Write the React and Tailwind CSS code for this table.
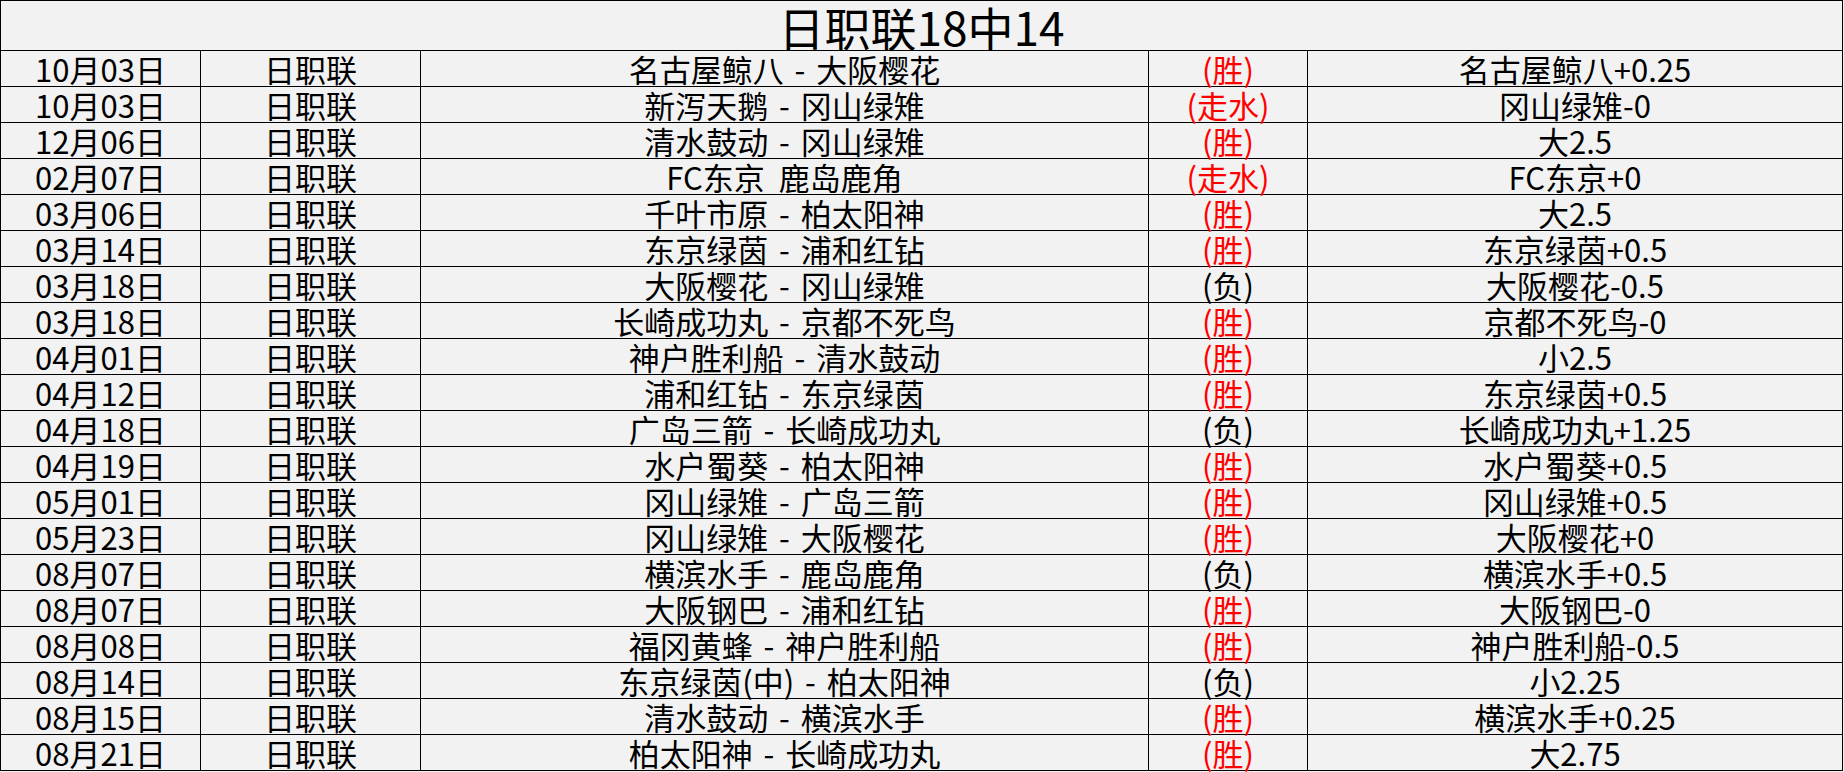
import React from "react";

const rows = [
  ["10月03日", "日职联", "名古屋鲸八 - 大阪樱花", "(胜)", true, "名古屋鲸八+0.25"],
  ["10月03日", "日职联", "新泻天鹅 - 冈山绿雉", "(走水)", true, "冈山绿雉-0"],
  ["12月06日", "日职联", "清水鼓动 - 冈山绿雉", "(胜)", true, "大2.5"],
  ["02月07日", "日职联", "FC东京  鹿岛鹿角", "(走水)", true, "FC东京+0"],
  ["03月06日", "日职联", "千叶市原 - 柏太阳神", "(胜)", true, "大2.5"],
  ["03月14日", "日职联", "东京绿茵 - 浦和红钻", "(胜)", true, "东京绿茵+0.5"],
  ["03月18日", "日职联", "大阪樱花 - 冈山绿雉", "(负)", false, "大阪樱花-0.5"],
  ["03月18日", "日职联", "长崎成功丸 - 京都不死鸟", "(胜)", true, "京都不死鸟-0"],
  ["04月01日", "日职联", "神户胜利船 - 清水鼓动", "(胜)", true, "小2.5"],
  ["04月12日", "日职联", "浦和红钻 - 东京绿茵", "(胜)", true, "东京绿茵+0.5"],
  ["04月18日", "日职联", "广岛三箭 - 长崎成功丸", "(负)", false, "长崎成功丸+1.25"],
  ["04月19日", "日职联", "水户蜀葵 - 柏太阳神", "(胜)", true, "水户蜀葵+0.5"],
  ["05月01日", "日职联", "冈山绿雉 - 广岛三箭", "(胜)", true, "冈山绿雉+0.5"],
  ["05月23日", "日职联", "冈山绿雉 - 大阪樱花", "(胜)", true, "大阪樱花+0"],
  ["08月07日", "日职联", "横滨水手 - 鹿岛鹿角", "(负)", false, "横滨水手+0.5"],
  ["08月07日", "日职联", "大阪钢巴 - 浦和红钻", "(胜)", true, "大阪钢巴-0"],
  ["08月08日", "日职联", "福冈黄蜂 - 神户胜利船", "(胜)", true, "神户胜利船-0.5"],
  ["08月14日", "日职联", "东京绿茵(中) - 柏太阳神", "(负)", false, "小2.25"],
  ["08月15日", "日职联", "清水鼓动 - 横滨水手", "(胜)", true, "横滨水手+0.25"],
  ["08月21日", "日职联", "柏太阳神 - 长崎成功丸", "(胜)", true, "大2.75"],
];

const cell =
  "h-[36px] border-r border-b border-black flex items-center justify-center whitespace-pre text-[31px] leading-[34px]";

function Match({ text }) {
  const parts = text.split(" - ");
  if (parts.length < 2) return text;
  return (
    <>
      {parts[0]}
      <span className="px-[4px]"> - </span>
      {parts[1]}
    </>
  );
}

export default function App() {
  return (
    <div
      className="w-[1844px] h-[772px] bg-[#f2f2f2] text-black overflow-hidden"
      style={{ fontFamily: '"Noto Sans CJK SC", "Noto Sans", sans-serif' }}
    >
      <div className="grid grid-cols-[200px_220px_728px_159px_535px] w-[1843px] border-t border-l border-black">
        <div className="col-span-5 h-[50px] border-r border-b border-black flex items-center justify-center text-[46px] leading-[48px]">
          日职联18中14
        </div>
        {rows.map((r, i) => (
          <React.Fragment key={i}>
            <div className={cell}>{r[0]}</div>
            <div className={cell}>{r[1]}</div>
            <div className={cell}>
              <Match text={r[2]} />
            </div>
            <div className={`${cell} ${r[4] ? "text-[#ff0000]" : "text-black"}`}>{r[3]}</div>
            <div className={cell}>{r[5]}</div>
          </React.Fragment>
        ))}
      </div>
    </div>
  );
}
